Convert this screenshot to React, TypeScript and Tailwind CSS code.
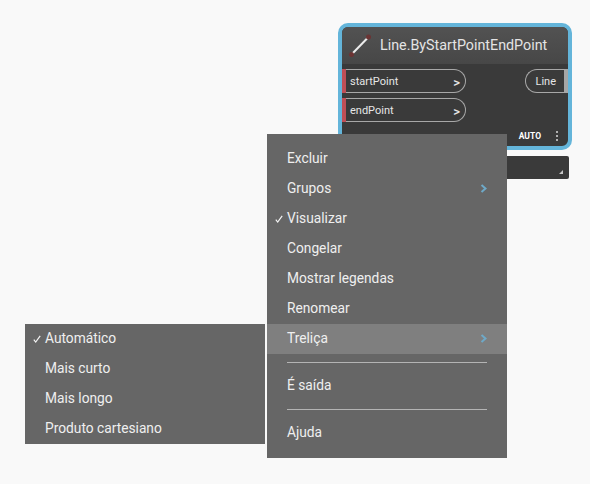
import React from "react";

function Port({ label }: { label: string }) {
  return (
    <div className="flex h-[24px] w-[124px] items-center">
      <div className="h-[24px] w-[4px] shrink-0 bg-[#c04f56]" />
      <div className="flex h-[24px] flex-1 items-center justify-between rounded-r-[12px] border border-l-0 border-[#a8a8a8] pl-[4px] pr-[5px] pt-[2px] text-[11px] text-[#e6e6e6]">
        <span>{label}</span>
        <span className="text-[13px] font-medium leading-none">&gt;</span>
      </div>
    </div>
  );
}

function Check() {
  return (
    <svg width="8" height="8" viewBox="0 0 8 8" className="absolute left-[8px] top-[11px]">
      <path d="M0.8 4.6 L2.7 7 L7.2 0.8" fill="none" stroke="#f4f4f4" strokeWidth="1.2" />
    </svg>
  );
}

function Item({ label, checked, arrow, active }: { label: string; checked?: boolean; arrow?: boolean; active?: boolean }) {
  return (
    <div className={`relative flex h-[30px] items-center px-[20px] pb-[1px] text-[13.75px] text-[#efefef] ${active ? "bg-[#7f7f7f]" : ""}`}>
      {checked && <Check />}
      <span className="flex-1">{label}</span>
      {arrow && (
        <svg width="7" height="9" viewBox="0 0 7 9">
          <path d="M1.5 1 L5.5 4.5 L1.5 8" fill="none" stroke="#6ea9c8" strokeWidth="2" />
        </svg>
      )}
    </div>
  );
}

export default function App() {
  return (
    <div className="relative h-[484px] w-[590px] overflow-hidden bg-[#f9f9f9] font-['Roboto',sans-serif]">
      {/* Node */}
      <div className="absolute left-[338px] top-[23px] h-[127px] w-[234px] overflow-hidden rounded-[10px] border-[4px] border-[#64b5da] bg-[#3a3a3a]">
        <div className="flex h-[37px] items-center bg-gradient-to-b from-[#525252] to-[#474747] pl-[6px]">
          <svg width="24" height="24" viewBox="0 0 24 24">
            <line x1="3.5" y1="20.5" x2="20.5" y2="3" stroke="#ececec" strokeWidth="2" />
            <circle cx="3.5" cy="20.5" r="2.5" fill="#6b3434" />
            <circle cx="20.5" cy="3" r="2.5" fill="#6b3434" />
          </svg>
          <span className="ml-[8px] text-[14.3px] text-[#e4e4e4]">Line.ByStartPointEndPoint</span>
        </div>
        <div className="flex justify-between pt-[5px]">
          <div className="flex flex-col gap-[5px]">
            <Port label="startPoint" />
            <Port label="endPoint" />
          </div>
          <div className="flex h-[24px] w-[43px] items-center">
            <div className="flex h-[24px] flex-1 items-center justify-end rounded-l-[12px] border border-r-0 border-[#a8a8a8] pr-[8px] pt-[2px] text-[11px] text-[#e6e6e6]">
              Line
            </div>
            <div className="h-[24px] w-[4px] bg-[#a6a6a6]" />
          </div>
        </div>
        <div className="flex h-[24px] items-center justify-end pr-[10px] pt-[4px]">
          <span className="mr-[15px] text-[8.5px] font-bold text-white">AUTO</span>
          <div className="flex flex-col gap-[2px]">
            <div className="h-[2px] w-[2px] bg-[#b0b0b0]" />
            <div className="h-[2px] w-[2px] bg-[#b0b0b0]" />
            <div className="h-[2px] w-[2px] bg-[#b0b0b0]" />
          </div>
        </div>
      </div>

      {/* Preview bar */}
      <div className="absolute left-[340px] top-[156px] flex h-[23px] w-[229px] items-end justify-end rounded-[2px] bg-[#3a3a3a] pb-[5px] pr-[6px]">
        <svg width="4" height="4" viewBox="0 0 5 5">
          <path d="M5 0 L5 5 L0 5 Z" fill="#c8c8c8" />
        </svg>
      </div>

      {/* Context menu */}
      <div className="absolute left-[267px] top-[134px] w-[240px] bg-[#666666] pb-[10px] pt-[10px]">
        <Item label="Excluir" />
        <Item label="Grupos" arrow />
        <Item label="Visualizar" checked />
        <Item label="Congelar" />
        <Item label="Mostrar legendas" />
        <Item label="Renomear" />
        <Item label="Treliça" arrow active />
        <div className="mx-[20px] mt-[8px] h-px bg-[#b4b4b4]" />
        <div className="mt-[8px]"><Item label="É saída" /></div>
        <div className="mx-[20px] mt-[8px] h-px bg-[#b4b4b4]" />
        <div className="mt-[8px]"><Item label="Ajuda" /></div>
      </div>

      {/* Submenu */}
      <div className="absolute left-[25px] top-[324px] w-[240px] bg-[#666666]">
        <Item label="Automático" checked />
        <Item label="Mais curto" />
        <Item label="Mais longo" />
        <Item label="Produto cartesiano" />
      </div>
    </div>
  );
}
